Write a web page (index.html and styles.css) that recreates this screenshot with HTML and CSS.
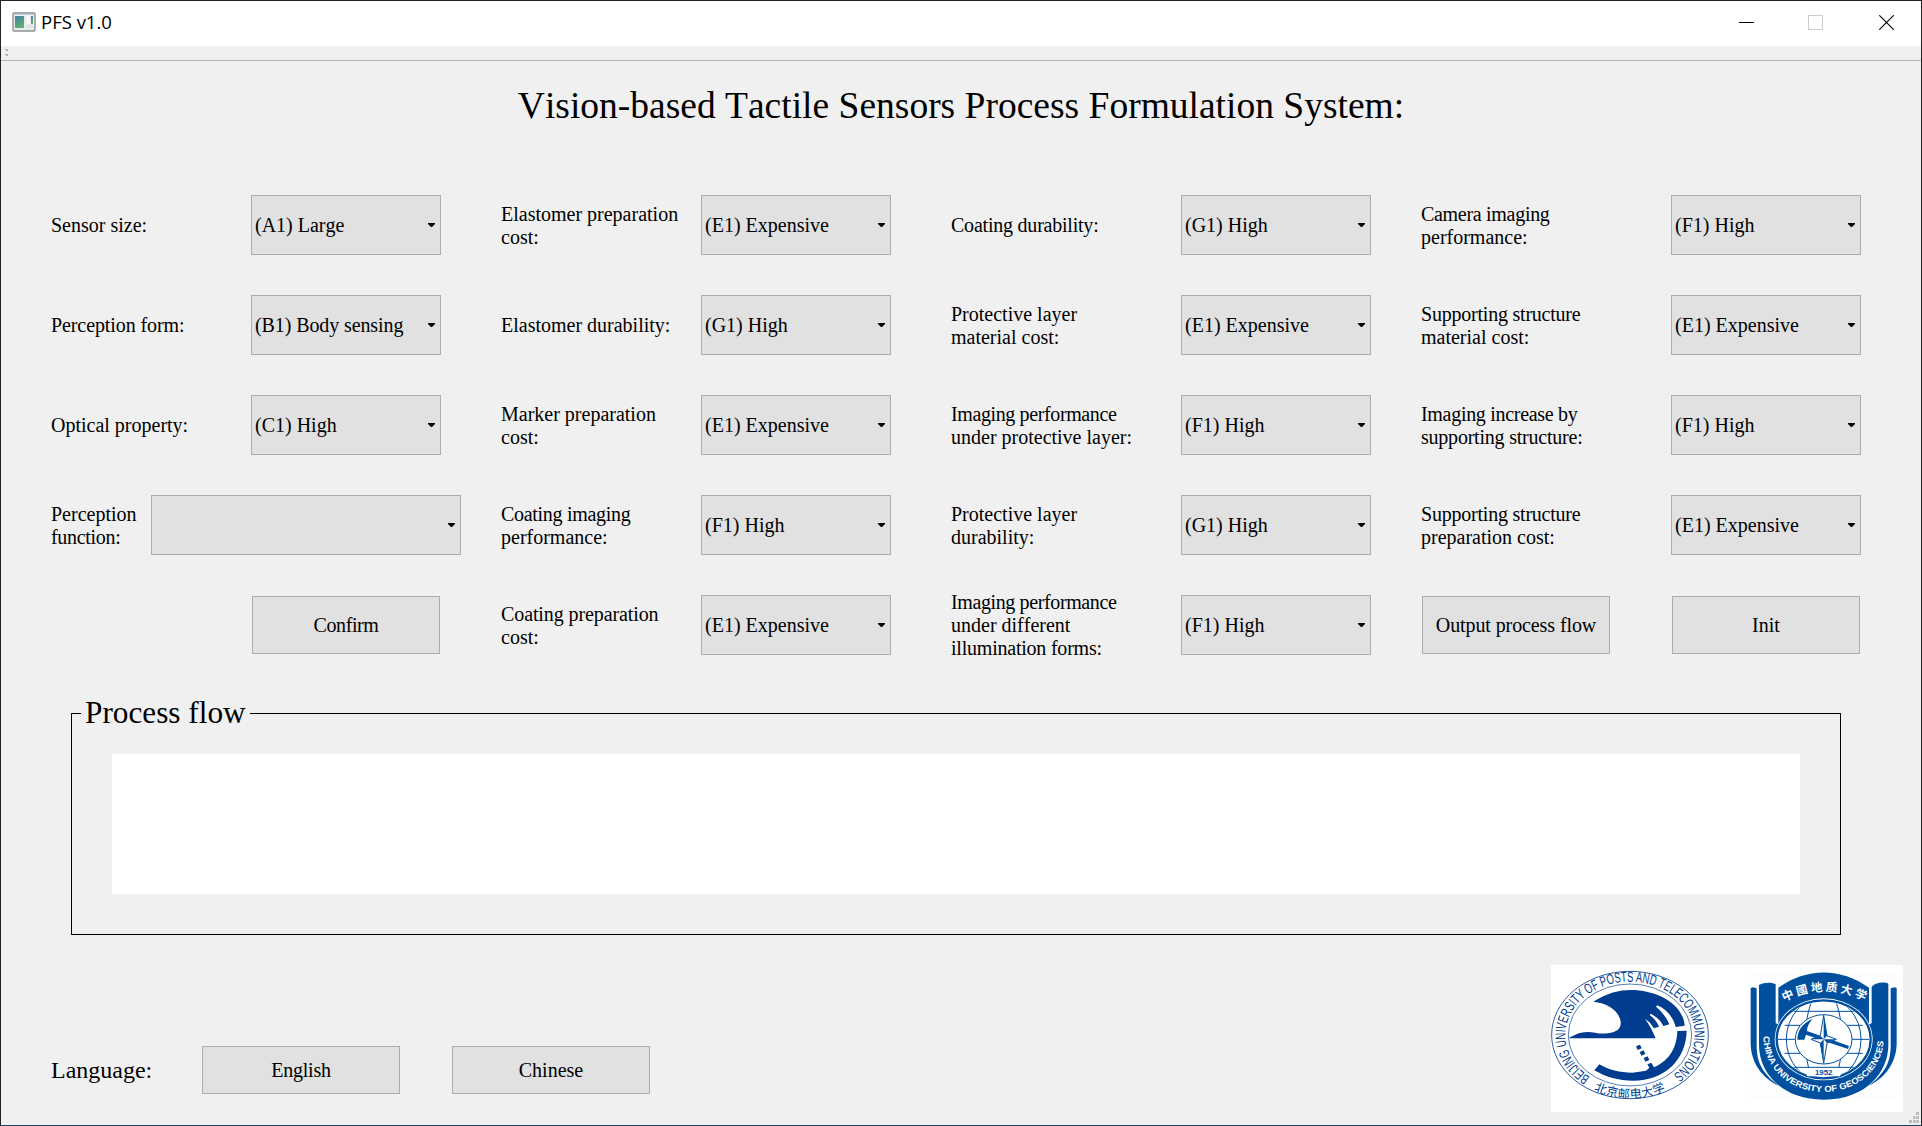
FILE: index.html
```html
<!DOCTYPE html>
<html lang="en">
<head>
<meta charset="utf-8">
<title>PFS v1.0</title>
<link rel="stylesheet" href="styles.css">
</head>
<body>
<div class="window">
  <header class="titlebar">
    <svg class="app-icon" width="24" height="20" viewBox="0 0 24 20">
      <defs><linearGradient id="pane" x1="0" y1="0" x2="0.4" y2="1"><stop offset="0" stop-color="#3f7fa8"/><stop offset="1" stop-color="#5fb070"/></linearGradient></defs>
      <rect x="1" y="1" width="22" height="18" rx="1" fill="#e9ebec" stroke="#8d9396" stroke-width="1.4"/>
      <path d="M2 2.5H22" stroke="#c9d3da"/>
      <rect x="3" y="4" width="9" height="12" fill="url(#pane)"/>
      <rect x="14" y="4" width="4" height="8" fill="#f8f8f8"/>
      <rect x="19" y="4" width="2" height="8" fill="url(#pane)"/>
      <rect x="14" y="13" width="7" height="3" fill="#dfe1e2"/>
    </svg>
    <span class="app-name">PFS v1.0</span>
    <div class="window-buttons">
      <svg width="15" height="15" viewBox="0 0 15 15"><path d="M0 7.5H15" stroke="#000"/></svg>
      <svg width="15" height="15" viewBox="0 0 15 15"><rect x=".5" y=".5" width="14" height="14" fill="none" stroke="#ccc"/></svg>
      <svg width="15" height="15" viewBox="0 0 15 15"><path d="M.3.3 14.7 14.7M14.7.3.3 14.7" stroke="#000" stroke-width="1.1"/></svg>
    </div>
  </header>
  <div class="toolbar"><svg width="3" height="8" viewBox="0 0 3 8"><path d="M0 1h3v2H1V2H0zM0 6h3v2H1V7H0z" fill="#b4b4b4"/></svg></div>

  <main class="content">
    <h1 class="heading">Vision-based Tactile Sensors Process Formulation System:</h1>

    <section class="form">
      <div class="column column-a">
        <div class="field"><label>Sensor size:</label><button class="combo">(A1) Large</button></div>
        <div class="field"><label class="snug">Perception form:</label><button class="combo snug">(B1) Body sensing</button></div>
        <div class="field"><label>Optical property:</label><button class="combo">(C1) High</button></div>
        <div class="field field-wide"><label class="two-line">Perception<br><span class="tighter">function:</span></label><button class="combo combo-wide"></button></div>
        <div class="field actions"><button class="push tightest">Confirm</button></div>
      </div>
      <div class="column column-b">
        <div class="field"><label class="two-line">Elastomer preparation<br>cost:</label><button class="combo">(E1) Expensive</button></div>
        <div class="field"><label>Elastomer durability:</label><button class="combo">(G1) High</button></div>
        <div class="field"><label class="two-line">Marker preparation<br>cost:</label><button class="combo">(E1) Expensive</button></div>
        <div class="field"><label class="two-line"><span class="tighter">Coating imaging</span><br>performance:</label><button class="combo">(F1) High</button></div>
        <div class="field"><label class="two-line"><span class="snug">Coating preparation</span><br>cost:</label><button class="combo">(E1) Expensive</button></div>
      </div>
      <div class="column column-c">
        <div class="field"><label class="tight">Coating durability:</label><button class="combo">(G1) High</button></div>
        <div class="field"><label class="two-line">Protective layer<br>material cost:</label><button class="combo">(E1) Expensive</button></div>
        <div class="field"><label class="two-line"><span class="tightest">Imaging performance</span><br>under protective layer:</label><button class="combo">(F1) High</button></div>
        <div class="field"><label class="two-line">Protective layer<br>durability:</label><button class="combo">(G1) High</button></div>
        <div class="field"><label><span class="tightest">Imaging performance</span><br>under different<br><span class="tight">illumination forms:</span></label><button class="combo">(F1) High</button></div>
      </div>
      <div class="column column-d">
        <div class="field"><label class="two-line"><span class="tighter">Camera imaging</span><br>performance:</label><button class="combo">(F1) High</button></div>
        <div class="field"><label class="two-line"><span class="tight">Supporting structure</span><br>material cost:</label><button class="combo">(E1) Expensive</button></div>
        <div class="field"><label class="two-line"><span class="tighter">Imaging increase by</span><br><span class="tight">supporting structure:</span></label><button class="combo">(F1) High</button></div>
        <div class="field"><label class="two-line"><span class="tight">Supporting structure</span><br>preparation cost:</label><button class="combo">(E1) Expensive</button></div>
        <div class="field actions actions-pair"><button class="push snug">Output process flow</button><button class="push">Init</button></div>
      </div>
    </section>

    <section class="group">
      <h2 class="group-title">Process flow</h2>
      <div class="flow-output"></div>
    </section>

    <footer class="footer">
      <div class="language">
        <span class="language-label">Language:</span>
        <button class="push push-language tight">English</button>
        <button class="push push-language">Chinese</button>
      </div>
      <svg class="logos" width="352" height="147" viewBox="33 30 1056 441">
        <defs>
          <path id="bupt-ring" d="M270 400A194 160 0 0 1 270 80A194 160 0 0 1 270 400"/>
          <path id="bupt-base" d="M95 355A218 184 0 0 0 445 355"/>
          <path id="cug-base" d="M100 238C100 468 462 468 462 238"/>
          <path id="cug-top" d="M160 141Q281 78 404 138"/>
          <clipPath id="globe"><ellipse cx="281" cy="253" rx="137" ry="112"/></clipPath>
        </defs>
        <rect x="33" y="30" width="1056" height="441" fill="#fff"/>
        <g fill="#003c8f">
          <g fill="none" stroke="#003c8f" stroke-width="2.5">
            <ellipse cx="270" cy="240" rx="235" ry="191"/>
            <ellipse cx="270" cy="240" rx="185" ry="153" stroke-width="2"/>
          </g>
          <text class="ring-text"><textPath href="#bupt-ring" startOffset="126" textLength="850" lengthAdjust="spacingAndGlyphs">BEIJING UNIVERSITY OF POSTS AND TELECOMMUNICATIONS</textPath></text>
          <text class="ring-cjk"><textPath href="#bupt-base" startOffset="84" textLength="222">北京邮电大学</textPath></text>
          <path d="M160 140C205 111 245 103 285 105C365 111 430 153 434 212L407 216C400 187 380 163 352 151L348 155C365 169 380 188 388 208L370 213C363 198 349 184 332 176L329 180C342 190 352 201 357 215L342 220C334 207 326 198 315 191C327 208 337 225 347 250L90 250C82 248 95 246 104 240C125 230 143 230 165 233C188 238 220 237 236 222C252 203 235 170 210 156C195 146 180 142 160 140Z"/>
          <path d="M412 228L440 227C438 315 374 376 280 377C235 377 197 366 163 346L178 328C208 345 238 353 277 353L318 347L328 338L322 328L334 323L342 337C380 320 410 288 412 228Z"/>
          <path d="M288 274l12-5 5 11-12 5zM299 291l12-5 5 11-12 5zM311 309l12-5 5 11-12 5z"/>
        </g>
        <g transform="translate(570 0)">
          <rect x="62" y="52" width="438" height="382" fill="#fcfdfe"/>
          <g fill="#00509f">
            <path d="M62 99L68 97 80 100V280C82 320 95 345 121 371L146 393C96 368 64 325 62 268Z"/>
            <path d="M500 99L494 97 482 100V280C480 320 467 345 441 371L416 393C466 368 498 325 500 268Z"/>
            <path d="M87 90C100 83 124 80 137 88V205L145 208V98C230 37 332 37 417 98V208L425 205V95C438 82 462 80 475 86V270C475 350 410 434 281 434C152 434 87 350 87 270Z"/>
          </g>
          <ellipse cx="281" cy="253" rx="147" ry="123" fill="#fff"/>
          <ellipse cx="281" cy="253" rx="141" ry="117" fill="none" stroke="#00509f" stroke-width="7"/>
          <g clip-path="url(#globe)" fill="none" stroke="#00509f" stroke-width="3">
            <path d="M190 169H372M164 211H398M144 253H418M164 295H398M190 337H372"/>
            <ellipse cx="281" cy="253" rx="112" ry="126"/>
            <ellipse cx="281" cy="253" rx="55" ry="150"/>
          </g>
          <ellipse cx="281" cy="253" rx="85" ry="74" fill="#fff" stroke="#00509f" stroke-width="3"/>
          <path d="M219 339H343L330 364H232Z" fill="#fff"/>
          <path d="M202 254C202 228 216 206 247 192C236 206 231 216 231 228L357 273 354 282 228 239 223 254Z" fill="#00509f"/>
          <path d="M281 181L291 242 319 253 291 264 281 325 271 264 243 253 271 242Z" fill="#fff" stroke="#00509f" stroke-width="3"/>
          <path d="M281 181L291 242 281 253ZM319 253L291 264 281 253ZM281 325L271 264 281 253ZM243 253L271 242 281 253Z" fill="#00509f"/>
          <text class="cug-year" x="281" y="360" text-anchor="middle" textLength="52" lengthAdjust="spacingAndGlyphs">1952</text>
          <text class="cug-latin"><textPath href="#cug-base" startOffset="6" textLength="534" lengthAdjust="spacingAndGlyphs">CHINA UNIVERSITY OF GEOSCIENCES</textPath></text>
          <text class="cug-cjk"><textPath href="#cug-top" startOffset="2" textLength="252">中國地质大学</textPath></text>
        </g>
      </svg>
    </footer>
  </main>
  <svg class="grip" width="10" height="11" viewBox="0 0 10 11" fill="#bdbdbd"><path d="M7 0h3v3H7zM4 4h2.500v3H4zM7 4h3v3H7zM0 8h3v3H0zM4 8h2.500v3H4zM7 8h3v3H7z"/></svg>
</div>
</body>
</html>
```
FILE: styles.css
```css
* { box-sizing: border-box; }

body {
  margin: 0;
  font-family: "Liberation Serif", "Times New Roman", serif;
  font-size: 20px;
  font-kerning: none;
  line-height: 23px;
  color: #000;
}

.window {
  position: relative;
  display: flex;
  flex-direction: column;
  width: 1922px;
  height: 1126px;
  border: 1px solid #232124;
  border-bottom-color: #1c4360;
  background: #f0f0f0;
  overflow: hidden;
}

.titlebar {
  display: flex;
  align-items: center;
  height: 45px;
  padding: 0 27px 0 11px;
  background: #fff;
}

.app-icon { margin-top: -4px; }

.app-name {
  margin: -5px 0 0 5px;
  font-family: "Open Sans", "Noto Sans", sans-serif;
  font-size: 18.500px;
}

.window-buttons {
  display: flex;
  gap: 54px;
  margin-left: auto;
  margin-top: -2px;
}

.window-buttons svg { display: block; }
.window-buttons svg:last-child { margin-left: 2px; }

.toolbar {
  display: flex;
  height: 15px;
  padding: 2px 4px;
  border-bottom: 1px solid #b4b4b4;
}

.content {
  display: flex;
  flex-direction: column;
  flex: 1;
}

.heading {
  margin: 23px 0 0;
  font-size: 37.500px;
  font-weight: 400;
  line-height: 44px;
  text-align: center;
}

.form {
  display: flex;
  margin: 67px 0 0 49px;
}

.column {
  display: flex;
  flex-direction: column;
  gap: 40px;
}

.column-a, .column-b { width: 391px; margin-right: 59px; }
.column-c { width: 421px; margin-right: 49px; }
.column-d { width: 441px; }

.field {
  display: flex;
  align-items: center;
  justify-content: space-between;
  height: 60px;
}

.field label { padding-left: 1px; white-space: nowrap; }
.field .two-line { padding-top: 2px; }

.field-wide { margin-right: -20px; }

.actions {
  justify-content: flex-end;
  padding: 0 1px;
}

.actions-pair {
  justify-content: space-between;
  padding-left: 2px;
}

.combo, .push {
  border: 1px solid #adadad;
  background: #e1e1e1;
  color: #000;
  font: inherit;
  font-kerning: none;
}

.combo {
  display: flex;
  align-items: center;
  justify-content: space-between;
  width: 190px;
  height: 60px;
  padding: 0 5px 0 3px;
  text-align: left;
}

.combo::after {
  content: "";
  width: 7px;
  height: 4px;
  margin-left: auto;
  background: #000;
  clip-path: polygon(0 0, 100% 0, 100% 25%, 57% 100%, 43% 100%, 0 25%);
}

.combo-wide { width: 310px; }

.push {
  width: 188px;
  height: 58px;
  padding: 0;
  text-align: center;
}

.snug { letter-spacing: -0.1px; }
.tight { letter-spacing: -0.22px; }
.tighter { letter-spacing: -0.3px; }
.tightest { letter-spacing: -0.38px; }

.group {
  display: flex;
  flex-direction: column;
  width: 1770px;
  height: 222px;
  margin: 58px 0 0 70px;
  border: 1px solid #000;
}

.group-title {
  align-self: flex-start;
  margin: -19px 0 0 9px;
  padding: 0 4px;
  background: #f0f0f0;
  font-size: 31.250px;
  font-weight: 400;
  line-height: 36px;
}

.flow-output {
  height: 140px;
  margin: 23px 40px 0;
  background: #fff;
}

.footer {
  display: flex;
  justify-content: space-between;
  margin: 30px 18px 0 50px;
}

.language {
  display: flex;
  align-items: center;
  height: 48px;
  margin-top: 81px;
}

.language-label {
  width: 151px;
  font-size: 24px;
}

.push-language {
  width: 198px;
  height: 48px;
  margin-right: 52px;
}

.logos { display: block; }

.ring-text { font: 43px "Liberation Sans Narrow", "Liberation Sans", sans-serif; }
.ring-cjk { font: 36px "Noto Sans CJK SC", sans-serif; }

.cug-year { font: 700 21px "Liberation Sans", sans-serif; fill: #00509f; }
.cug-latin { font: 700 26px "Liberation Sans", sans-serif; fill: #fff; }
.cug-cjk { font: 700 35px "Noto Sans CJK SC", sans-serif; fill: #fff; }

.grip {
  position: absolute;
  right: 2px;
  bottom: 2px;
}
```
